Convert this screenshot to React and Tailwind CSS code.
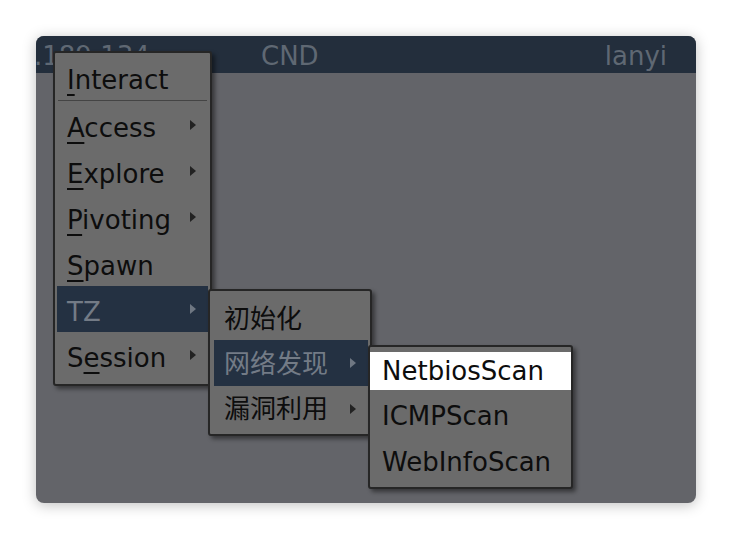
import React from 'react';

const font = { fontFamily: '"DejaVu Sans", "Noto Sans CJK SC", sans-serif' };

function Arrow({ active }) {
    return (
        <svg width="6" height="10" viewBox="0 0 6 10" className="shrink-0">
            <path d="M0 0 L6 5 L0 10 Z" fill={active ? '#6f7782' : '#222222'} />
        </svg>
    );
}

function Item({ children, arrow, active, height = 'h-[46px]', shift = 'pt-[6px]' }) {
    return (
        <div
            className={`${height} pl-[10px] pr-[12px] flex items-center justify-between ${active ? 'bg-[#243142] text-[#737b86]' : 'text-[#0d0d0d]'}`}
        >
            <span className={`leading-none ${shift}`}>{children}</span>
            {arrow && <Arrow active={active} />}
        </div>
    );
}

function Key({ children }) {
    return <span className="underline decoration-2 underline-offset-[5px]">{children}</span>;
}

export default function App() {
    return (
        <div className="w-[732px] h-[540px] bg-white pt-[36px] pl-[36px]" style={font}>
            <div className="relative w-[660px] h-[467px] rounded-lg bg-[#636469] shadow-[0_2px_14px_rgba(0,0,0,0.25)]">
                {/* Header */}
                <div className="h-[37px] bg-[#232e3c] rounded-t-lg flex items-center text-[26px] text-[#5f6873] overflow-hidden">
                    <span className="w-[227px] -ml-[2px] leading-none pt-[3px]">.189.134</span>
                    <span className="leading-none pt-[3px]">CND</span>
                    <span className="ml-auto pr-[29px] leading-none pt-[3px]">lanyi</span>
                </div>

                {/* Main menu */}
                <div className="absolute left-[17px] top-[15px] w-[159px] h-[335px] bg-[#6b6b6b] border-2 border-[#262626] rounded-[3px] px-[2px] pt-[2px] text-[26px] shadow-[3px_3px_4px_rgba(0,0,0,0.45)]">
                    <Item height="h-[44px]"><Key>I</Key>nteract</Item>
                    <div className="my-[1px] h-[1px] bg-[#444444] mx-[1px]" />
                    <Item arrow><Key>A</Key>ccess</Item>
                    <Item arrow><Key>E</Key>xplore</Item>
                    <Item arrow><Key>P</Key>ivoting</Item>
                    <Item><Key>S</Key>pawn</Item>
                    <Item arrow active>TZ</Item>
                    <Item arrow>S<Key>e</Key>ssion</Item>
                </div>

                {/* TZ submenu */}
                <div className="absolute left-[172px] top-[253px] w-[164px] h-[147px] bg-[#6b6b6b] border-2 border-[#262626] rounded-[3px] pl-[4px] pr-[2px] pt-[3px] text-[26px] shadow-[3px_3px_4px_rgba(0,0,0,0.45)]">
                    <Item shift="pt-[3px]">初始化</Item>
                    <Item arrow active shift="pt-[2px]">网络发现</Item>
                    <Item arrow shift="pt-0">漏洞利用</Item>
                </div>

                {/* 网络发现 submenu */}
                <div className="absolute left-[332px] top-[309px] w-[205px] h-[144px] bg-[#6b6b6b] border-2 border-[#262626] rounded-[3px] pt-[5px] text-[26px] text-[#0d0d0d] shadow-[3px_3px_4px_rgba(0,0,0,0.45)]">
                    <div className="h-[38px] bg-white flex items-center pl-[12px] leading-none">NetbiosScan</div>
                    <div className="h-[46px] flex items-center pl-[12px] leading-none pt-[6px]">ICMPScan</div>
                    <div className="h-[46px] flex items-center pl-[12px] leading-none pt-[6px]">WebInfoScan</div>
                </div>
            </div>
        </div>
    );
}
